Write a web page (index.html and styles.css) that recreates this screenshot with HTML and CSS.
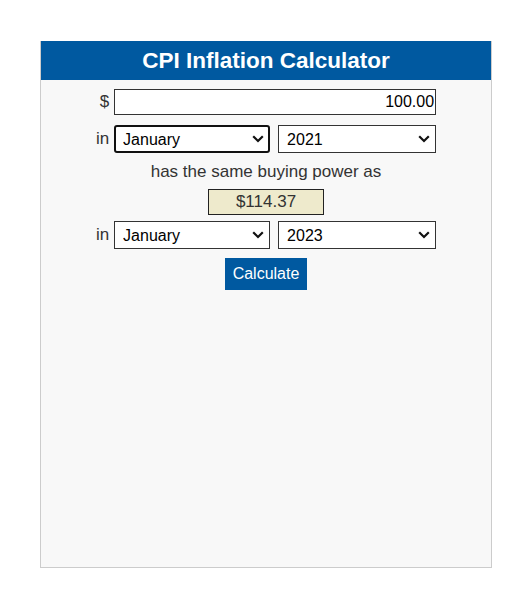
FILE: index.html
```html
<!DOCTYPE html>
<html lang="en">
<head>
<meta charset="utf-8">
<title>CPI Inflation Calculator</title>
<link rel="stylesheet" href="styles.css">
</head>
<body>
<div class="calc">
  <h1 class="calc-title">CPI Inflation Calculator</h1>
  <form class="calc-body">
    <div class="calc-grid">
      <span class="lbl">$</span>
      <input class="amount" type="text" value="100.00">
      <span class="lbl">in</span>
      <div class="pair">
        <span class="sel-wrap sel-month">
          <select class="sel sel-focus"><option>January</option></select>
          <svg class="chev" width="12" height="8" viewBox="0 0 12 8"><path d="M1.2 1.3 L6 6 L10.8 1.3" fill="none" stroke="#111" stroke-width="2.2"/></svg>
        </span>
        <span class="sel-wrap sel-year">
          <select class="sel"><option>2021</option></select>
          <svg class="chev" width="12" height="8" viewBox="0 0 12 8"><path d="M1.2 1.3 L6 6 L10.8 1.3" fill="none" stroke="#111" stroke-width="2.2"/></svg>
        </span>
      </div>
    </div>
    <div class="same">has the same buying power as</div>
    <div class="result">$114.37</div>
    <div class="calc-grid grid-to">
      <span class="lbl">in</span>
      <div class="pair">
        <span class="sel-wrap sel-month">
          <select class="sel"><option>January</option></select>
          <svg class="chev" width="12" height="8" viewBox="0 0 12 8"><path d="M1.2 1.3 L6 6 L10.8 1.3" fill="none" stroke="#111" stroke-width="2.2"/></svg>
        </span>
        <span class="sel-wrap sel-year">
          <select class="sel"><option>2023</option></select>
          <svg class="chev" width="12" height="8" viewBox="0 0 12 8"><path d="M1.2 1.3 L6 6 L10.8 1.3" fill="none" stroke="#111" stroke-width="2.2"/></svg>
        </span>
      </div>
    </div>
    <button type="button" class="btn">Calculate</button>
  </form>
</div>
</body>
</html>
```
FILE: styles.css
```css
html, body { margin: 0; padding: 0; background: #fff; }
body {
  font-family: "Liberation Sans", Arial, sans-serif;
  padding: 41px 40px 0 40px;
}
.calc {
  width: 450px;
  height: 526px;
  border: 1px solid #ccc;
  border-top: none;
  background: #f8f8f8;
}
.calc-title {
  margin: 0;
  background: #0059a0;
  color: #fff;
  font-size: 22.5px;
  font-weight: bold;
  text-align: center;
  height: 39px;
  line-height: 40px;
}
.calc-body {
  display: flex;
  flex-direction: column;
  align-items: center;
  padding-top: 9px;
}
.calc-grid {
  display: grid;
  grid-template-columns: auto 322px;
  column-gap: 5px;
  row-gap: 10px;
  align-items: center;
}
.grid-to { margin-top: 6px; }
.lbl {
  text-align: right;
  font-size: 17px;
  color: #333;
}
.amount {
  box-sizing: border-box;
  width: 322px;
  height: 26px;
  border: 1px solid #333;
  background: #fff;
  font-family: inherit;
  font-size: 16px;
  text-align: right;
  padding: 0 1px;
  color: #000;
  outline: none;
}
.pair {
  display: flex;
  gap: 8px;
}
.sel-wrap {
  position: relative;
  display: block;
  height: 28px;
}
.sel-month { width: 156px; }
.sel-year { width: 158px; }
.sel {
  -webkit-appearance: none;
  appearance: none;
  box-sizing: border-box;
  width: 100%;
  height: 28px;
  border: 1px solid #333;
  border-radius: 0;
  background: #fff;
  font-family: inherit;
  font-size: 16px;
  color: #000;
  padding: 0 24px 0 8px;
  outline: none;
}
.sel-focus {
  border: 2px solid #111;
  border-radius: 3px;
  padding-left: 7px;
}
.chev {
  position: absolute;
  right: 6px;
  top: 10px;
  pointer-events: none;
}
.same {
  margin-top: 9px;
  font-size: 17px;
  color: #333;
  line-height: 20px;
}
.result {
  box-sizing: border-box;
  margin-top: 7px;
  width: 116px;
  height: 26px;
  background: #eeeacc;
  border: 1px solid #222;
  text-align: center;
  font-size: 17px;
  line-height: 24px;
  color: #333;
}
.btn {
  margin-top: 9px;
  width: 82px;
  height: 32px;
  background: #0059a0;
  color: #fff;
  border: none;
  font-family: inherit;
  font-size: 16px;
  padding: 0;
}
```
